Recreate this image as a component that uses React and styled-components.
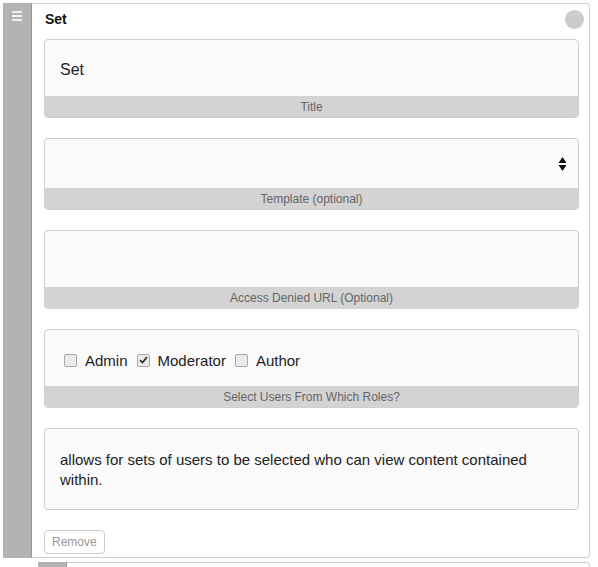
import React from 'react';
import styled, { createGlobalStyle } from 'styled-components';

const GlobalStyle = createGlobalStyle`
  html, body {
    margin: 0;
    padding: 0;
    background: #ffffff;
    font-family: "Liberation Sans", Arial, sans-serif;
    color: #222;
  }
`

const Page = styled.div`
  padding: 3px 8px 0 3px;
  height: 564px;
  overflow: hidden;
  display: flex;
  flex-direction: column;
  gap: 4px;
`

const Item = styled.div`
  display: flex;
  flex-shrink: 0;
  margin-left: ${props => props.indent || 0}px;
`

const Handle = styled.div`
  width: 29px;
  flex-shrink: 0;
  background: #b3b3b3;
  border-right: 1px solid #999;
  display: flex;
  justify-content: center;
  padding-top: 8px;
  box-sizing: border-box;
`

const HandleIcon = styled.div`
  width: 10px;
  display: flex;
  flex-direction: column;
  gap: 2px;
  span {
    height: 2px;
    background: #f2f2f2;
  }
`

const Panel = styled.div`
  flex: 1;
  border: 1px solid #cfcfcf;
  border-left: none;
  border-radius: 0 4px 4px 0;
  padding: 3px 10px 3px 12px;
  min-height: ${props => props.stub ? '20px' : 'auto'};
  display: flex;
  flex-direction: column;
`

const PanelHeader = styled.div`
  display: flex;
  justify-content: space-between;
  align-items: center;
  height: 24px;
  margin-bottom: 8px;
`

const PanelTitle = styled.h3`
  margin: 0 0 0 1px;
  font-size: 14px;
  font-weight: 700;
  color: #111;
`

const Dot = styled.div`
  width: 19px;
  height: 19px;
  border-radius: 50%;
  background: #cccccc;
  margin-right: -5px;
`

const Fields = styled.div`
  display: flex;
  flex-direction: column;
  gap: 20px;
`

const Field = styled.div`
  border: 1px solid #cfcfcf;
  border-radius: 4px;
  background: #fafafa;
  overflow: hidden;
`

const FieldBody = styled.div`
  height: ${props => props.h || 56}px;
  box-sizing: border-box;
  display: flex;
  align-items: center;
  padding: ${props => props.h ? '0 15px' : '4px 15px 0'};
  font-size: ${props => props.fs || 16}px;
  color: #222;
`

const FieldLabel = styled.div`
  height: 21px;
  background: #d3d3d3;
  color: #666;
  font-size: 12px;
  display: flex;
  align-items: center;
  justify-content: center;
`

const SelectArrows = styled.svg`
  margin-left: auto;
  margin-right: -4px;
`

const Roles = styled.div`
  display: flex;
  align-items: center;
  padding-left: 4px;
  font-size: 15px;
`

const Role = styled.label`
  display: flex;
  align-items: center;
  margin-right: 9px;
`

const Box = styled.span`
  width: 11px;
  height: 11px;
  border: 1px solid #a6a6a6;
  border-radius: 2px;
  background: #ececec;
  margin-right: 8px;
  display: flex;
  align-items: center;
  justify-content: center;
`

const Description = styled.div`
  border: 1px solid #cfcfcf;
  border-radius: 4px;
  background: #fafafa;
  padding: 21px 50px 19px 15px;
  font-size: 15px;
  line-height: 20px;
  color: #222;
`

const Footer = styled.div`
  padding-top: 20px;
`

const RemoveButton = styled.button`
  font-family: "Liberation Sans", Arial, sans-serif;
  font-size: 12px;
  color: #999;
  background: #fff;
  border: 1px solid #ccc;
  border-radius: 4px;
  height: 24px;
  padding: 0 7px;
`

const roles = [
  { name: 'Admin', checked: false },
  { name: 'Moderator', checked: true },
  { name: 'Author', checked: false },
]

export default function App() {
  return (
    <>
      <GlobalStyle />
      <Page>
        <Item>
          <Handle>
            <HandleIcon><span /><span /><span /></HandleIcon>
          </Handle>
          <Panel>
            <PanelHeader>
              <PanelTitle>Set</PanelTitle>
              <Dot />
            </PanelHeader>
            <Fields>
              <Field>
                <FieldBody>Set</FieldBody>
                <FieldLabel>Title</FieldLabel>
              </Field>
              <Field>
                <FieldBody h={49}>
                  <SelectArrows width="9" height="16" viewBox="0 0 9 16">
                    <path d="M4.5 1 L8.5 7 L0.5 7 Z" fill="#111" />
                    <path d="M0.5 9 L8.5 9 L4.5 15 Z" fill="#111" />
                  </SelectArrows>
                </FieldBody>
                <FieldLabel>Template (optional)</FieldLabel>
              </Field>
              <Field>
                <FieldBody />
                <FieldLabel>Access Denied URL (Optional)</FieldLabel>
              </Field>
              <Field>
                <FieldBody fs={15}>
                  <Roles>
                    {roles.map(r => (
                      <Role key={r.name}>
                        <Box>
                          {r.checked && (
                            <svg width="9" height="8" viewBox="0 0 9 8">
                              <path d="M1 4.2 L3.5 6.5 L8 1.2" stroke="#333" strokeWidth="1.8" fill="none" />
                            </svg>
                          )}
                        </Box>
                        {r.name}
                      </Role>
                    ))}
                  </Roles>
                </FieldBody>
                <FieldLabel>Select Users From Which Roles?</FieldLabel>
              </Field>
              <Description>
                allows for sets of users to be selected who can view content contained within.
              </Description>
            </Fields>
            <Footer>
              <RemoveButton>Remove</RemoveButton>
            </Footer>
          </Panel>
        </Item>
        <Item indent={35}>
          <Handle />
          <Panel stub />
        </Item>
      </Page>
    </>
  );
}
